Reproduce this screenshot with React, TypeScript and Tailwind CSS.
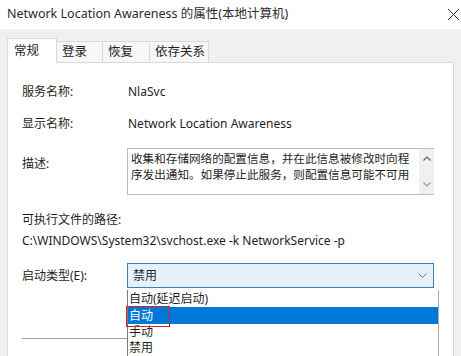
import React from "react";

const font = { fontFamily: '"Noto Sans", "Noto Sans CJK SC", sans-serif' };

const tabs = ["常规", "登录", "恢复", "依存关系"];
const options = ["自动(延迟启动)", "自动", "手动", "禁用"];

function Row({ label, value }: { label: string; value: string }) {
  return (
    <div className="flex h-[20px] items-center leading-[20px]">
      <div className="w-[106px] shrink-0">{label}</div>
      <div>{value}</div>
    </div>
  );
}

export default function App() {
  return (
    <div
      className="relative h-[356px] w-[461px] overflow-hidden bg-[#f0f0f0] text-[12px] text-[#1e1e1e]"
      style={font}
    >
      {/* 标题栏 */}
      <div className="flex h-[29px] items-center justify-between bg-white pl-[7px] pr-[1px]">
        <span className="text-[12.5px] text-[#2b2b2b]">Network Location Awareness 的属性(本地计算机)</span>
        <svg width="13" height="13" viewBox="0 0 13 13">
          <path d="M1 1 12 12M12 1 1 12" stroke="#333" strokeWidth="1" />
        </svg>
      </div>

      <div className="px-[7px] pt-[9px]">
        {/* 选项卡 */}
        <div className="relative z-10 flex h-[24px] items-end">
          {tabs.map((t, i) =>
            i === 0 ? (
              <div
                key={t}
                className="-mb-[1px] flex h-[25px] w-[50px] items-center border border-b-0 border-[#d9d9d9] bg-white pl-[6px] text-[12.5px]"
              >
                {t}
              </div>
            ) : (
              <div
                key={t}
                className={`flex h-[21px] items-center border border-l-0 border-b-0 border-[#d9d9d9] bg-[#f7f7f7] pl-[5px] text-[12.5px] ${
                  i === 3 ? "w-[59px]" : i === 1 ? "w-[46px]" : "w-[47px]"
                }`}
              >
                {t}
              </div>
            )
          )}
        </div>

        {/* 面板 */}
        <div className="h-[300px] border border-[#d9d9d9] bg-white pl-[14px] pr-[19px]">
          <div className="pt-[19px]">
            <Row label="服务名称:" value="NlaSvc" />
          </div>
          <div className="pt-[12px]">
            <Row label="显示名称:" value="Network Location Awareness" />
          </div>

          <div className="mt-[14px] flex">
            <div className="w-[105px] shrink-0 pt-[6px] leading-[20px]">描述:</div>
            <div className="flex h-[47px] flex-1 border border-r-0 border-[#bcbcbc]">
              <div className="flex-1 overflow-hidden whitespace-nowrap pl-[3px] pt-[2px] text-[11.6px] leading-[16px]">
                <div>收集和存储网络的配置信息，并在此信息被修改时向程</div>
                <div>序发出通知。如果停止此服务，则配置信息可能不可用</div>
              </div>
              <div className="flex w-[15px] shrink-0 flex-col items-center justify-between bg-[#f0f0f0] py-[7px]">
                <svg width="8" height="5" viewBox="0 0 8 5">
                  <path d="M0.5 4.5 4 1 7.5 4.5" fill="none" stroke="#606060" strokeWidth="1.2" />
                </svg>
                <svg width="8" height="5" viewBox="0 0 8 5">
                  <path d="M0.5 0.5 4 4 7.5 0.5" fill="none" stroke="#9a9a9a" strokeWidth="1.2" />
                </svg>
              </div>
            </div>
          </div>

          <div className="mt-[15px] leading-[20px]">可执行文件的路径:</div>
          <div className="mt-[1px] leading-[20px]">C:\WINDOWS\System32\svchost.exe -k NetworkService -p</div>

          <div className="mt-[12px] flex items-center">
            <div className="w-[105px] shrink-0 pt-[1px]">启动类型(E):</div>
            <div className="flex h-[25px] flex-1 items-center justify-between border border-[#3c7fb1] bg-[#e5f1fb] pl-[5px] pr-[6px]">
              <span>禁用</span>
              <svg width="9" height="5" viewBox="0 0 9 5">
                <path d="M0.5 0.5 4.5 4.5 8.5 0.5" fill="none" stroke="#707070" strokeWidth="1" />
              </svg>
            </div>
          </div>

          <div className="mt-[50px] h-px w-[106px] bg-[#a0a0a0]" />
        </div>
      </div>

      {/* 下拉列表 */}
      <div className="absolute left-[127px] top-[290px] w-[312px] border border-t-0 border-[#7a7a7a] border-r-[#b0b0b0] bg-white">
        {options.map((o, i) => (
          <div
            key={o}
            className={`pl-[1px] ${i < 2 ? "h-[17px] leading-[17px]" : "h-[16px] leading-[16px]"} ${
              i === 1 ? "bg-[#0078d7] text-white" : ""
            }`}
          >
            {o}
          </div>
        ))}
      </div>
      <div className="absolute left-[126px] top-[306px] h-[21px] w-[44px] border-[1.5px] border-[#c8242b]" />
    </div>
  );
}
